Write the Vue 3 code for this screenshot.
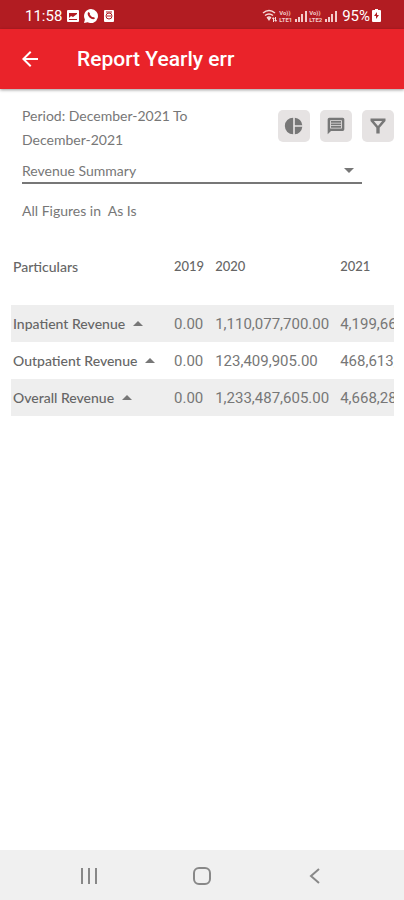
<template>
  <div class="screen">
    <div class="status-bar">
      <div class="status-left">
        <span>11:58</span>
        <svg class="picture" viewBox="0 0 12 12">
          <path fill="#fff" fill-rule="evenodd" d="M1 0h10q1 0 1 1v10q0 1-1 1H1q-1 0-1-1V1q0-1 1-1ZM2 3v5l2-2 2 1 4-3V3ZM2 9h8v1H2Z" />
        </svg>
        <svg class="phone" viewBox="0 0 14 14">
          <path fill="#fff" d="M7 0a7 7 0 1 1-3.3 13.2L0 14l.9-3.6A7 7 0 0 1 7 0Z" />
          <path fill="none" stroke="#b21c22" stroke-width="2" d="M5 3.5q-1 2 1.2 4.2t4.3 1.2" />
        </svg>
        <svg class="picture" viewBox="0 0 12 12">
          <rect x="1" width="10" height="12" rx="1" fill="#fff" />
          <circle cx="6" cy="6" r="3" fill="none" stroke="#b21c22" />
          <path stroke="#b21c22" d="M4 6h4M3 2h6" />
        </svg>
      </div>
      <div class="status-right">
        <svg class="wifi" viewBox="0 0 16 14">
          <path fill="none" stroke="#f7dcdc" stroke-width="1.5" d="M1 4q6-5 12 0M3 6.500q4-3 8 0M5 9q2-2 4 0" />
          <path fill="#f7dcdc" d="m7 12-2-3h4ZM11 8l2 2h-1v3h-1v-3h-1ZM14 13l-2-2h1V8h1v3h1Z" />
        </svg>
        <template v-for="sim in sims" :key="sim">
          <span class="volte"><span>Vo))</span><span>{{ sim }}</span></span>
          <svg class="signal" viewBox="0 0 13 12">
            <path fill="#f3cccc" d="M0 9h2v3H0ZM3 7h2v5H3ZM6 4h2v8H6ZM10 1h2v11h-2Z" />
          </svg>
        </template>
        <span class="percent">95%</span>
        <svg class="battery" viewBox="0 0 9 13">
          <path fill="#fff" d="M3 0h3v1h2q1 0 1 1v10q0 1-1 1H1q-1 0-1-1V2q0-1 1-1h2Z" />
          <path fill="#b21c22" d="M5 3 2 7h2v3l3-4H5Z" />
        </svg>
      </div>
    </div>

    <header class="app-bar">
      <button class="back" aria-label="Back">
        <svg viewBox="0 0 24 24"><path fill="#fff" d="M20 11H7.830l5.590-5.590L12 4l-8 8 8 8 1.410-1.410L7.830 13H20Z" /></svg>
      </button>
      <h1>Report Yearly err</h1>
    </header>

    <main>
      <section class="filters">
        <div class="period-row">
          <p>Period: December-2021 To December-2021</p>
          <div class="actions">
            <button aria-label="Chart">
              <svg viewBox="0 0 24 24"><path d="M11 2v20A10 10 0 0 1 11 2ZM13 2v9h9A10 10 0 0 0 13 2ZM13 13v9a10 10 0 0 0 9-9Z" /></svg>
            </button>
            <button aria-label="Comments">
              <svg viewBox="0 0 24 24"><path fill-rule="evenodd" d="M4 2h16a2 2 0 0 1 2 2v12a2 2 0 0 1-2 2H6l-4 4V4a2 2 0 0 1 2-2ZM5 5v10h14V5ZM6 6h12v2H6ZM6 9h12v2H6ZM6 12h12v2H6Z" /></svg>
            </button>
            <button aria-label="Filter">
              <svg viewBox="0 0 24 24"><path fill-rule="evenodd" d="M3 3h18v3l-7 8v7h-4v-7L3 6ZM7 6l5 6 5-6Z" /></svg>
            </button>
          </div>
        </div>
        <div class="select-wrap">
          <select v-model="report" aria-label="Report type">
            <option>Revenue Summary</option>
          </select>
          <svg class="caret" viewBox="0 0 10 5"><path d="M0 0h10L5 5Z" /></svg>
        </div>
        <p class="figures">All Figures in&nbsp; As Is</p>
      </section>

      <div class="table-wrap">
        <table>
          <thead>
            <tr>
              <th>Particulars</th>
              <th v-for="year in years" :key="year" class="year">{{ year }}</th>
            </tr>
          </thead>
          <tbody>
            <tr v-for="row in rows" :key="row.name">
              <th scope="row">
                <button class="sort">
                  {{ row.name }}
                  <svg class="caret" viewBox="0 0 10 5"><path d="M0 5h10L5 0Z" /></svg>
                </button>
              </th>
              <td v-for="(value, i) in row.values" :key="i">{{ value }}</td>
            </tr>
          </tbody>
        </table>
      </div>
    </main>

    <nav class="nav-bar">
      <button aria-label="Recent apps">
        <svg viewBox="0 0 20 20"><path d="M3 2v16M10 2v16M17 2v16" /></svg>
      </button>
      <button aria-label="Home">
        <svg viewBox="0 0 20 20"><rect x="2" y="2" width="16" height="16" rx="5" /></svg>
      </button>
      <button aria-label="Back">
        <svg viewBox="0 0 20 20"><path d="m14 3-8 7 8 7" /></svg>
      </button>
    </nav>
  </div>
</template>

<script setup>
import { ref } from 'vue';

const report = ref('Revenue Summary');
const sims = ['LTE1', 'LTE2'];
const years = ['2019', '2020', '2021'];

const rows = [
  { name: 'Inpatient Revenue', values: ['0.00', '1,110,077,700.00', '4,199,66'] },
  { name: 'Outpatient Revenue', values: ['0.00', '123,409,905.00', '468,613,'] },
  { name: 'Overall Revenue', values: ['0.00', '1,233,487,605.00', '4,668,28'] },
];
</script>

<style>
body {
  margin: 0;
  background: #fff;
}
</style>

<style scoped>
.screen {
  min-height: 100vh;
  display: flex;
  flex-direction: column;
  font-family: Lato, 'Liberation Sans', sans-serif;
  font-size: 14px;
  color: #777;
}

button {
  border: 0;
  padding: 0;
  background: none;
  font: inherit;
  color: inherit;
}

svg {
  display: block;
  flex-shrink: 0;
}

p {
  margin: 0;
}

/* Status bar */
.status-bar {
  display: flex;
  justify-content: space-between;
  align-items: center;
  height: 29px;
  padding: 2px 23px 0 25px;
  box-sizing: border-box;
  background: #b21c22;
  color: #fff;
  font-family: Roboto, sans-serif;
}

.status-left,
.status-right {
  display: flex;
  align-items: center;
}

.status-left {
  gap: 5px;
  font-size: 15px;
}

.picture {
  width: 12px;
  height: 12px;
}

.phone {
  width: 14px;
  height: 14px;
}

.wifi {
  width: 16px;
  height: 14px;
}

.volte {
  display: flex;
  flex-direction: column;
  width: 16px;
  margin-left: 1px;
  font-size: 6px;
  font-weight: 700;
  line-height: 7px;
  color: #f3cccc;
}

.signal {
  width: 13px;
  height: 12px;
}

.percent {
  margin: 0 2px 0 4px;
  font-size: 15px;
}

.battery {
  width: 9px;
  height: 13px;
}

/* App bar */
.app-bar {
  display: flex;
  align-items: center;
  gap: 35px;
  height: 60px;
  padding: 0 18px;
  background: #ea232a;
  box-shadow: 0 1px 3px rgba(0, 0, 0, 0.4);
}

.back svg {
  width: 24px;
  height: 24px;
}

.app-bar h1 {
  margin: 0;
  color: #fff;
  font-family: Roboto, sans-serif;
  font-size: 21px;
  font-weight: 500;
}

main {
  flex: 1;
}

/* Report options */
.filters {
  padding: 15px 10px 0 22px;
}

.period-row {
  display: flex;
  justify-content: space-between;
  line-height: 24px;
}

.period-row p {
  width: 170px;
}

.actions {
  display: flex;
  gap: 10px;
  padding-top: 6px;
}

.actions button {
  display: grid;
  place-items: center;
  width: 32px;
  height: 32px;
  border-radius: 5px;
  background: #e6e3e3;
}

.actions svg {
  width: 20px;
  height: 20px;
  fill: #777;
}

.select-wrap {
  display: flex;
  align-items: center;
  margin-right: 32px;
  padding: 6px 8px 0 0;
  border-bottom: 2px solid #777;
}

select {
  flex: 1;
  height: 24px;
  border: 0;
  padding: 0;
  appearance: none;
  background: none;
  font: inherit;
  color: inherit;
}

.caret {
  width: 10px;
  height: 5px;
  fill: #777;
}

.figures {
  padding-top: 15px;
  line-height: 24px;
}

/* Revenue table */
.table-wrap {
  margin: 21px 10px 0 11px;
  overflow: hidden;
}

table {
  min-width: 100%;
  border-collapse: collapse;
  white-space: nowrap;
}

th,
td {
  height: 37px;
  padding: 0 11px 0 0;
  text-align: left;
}

th {
  font-weight: 500;
  color: #666;
}

th:first-child {
  width: 150px;
  min-width: 150px;
  padding-left: 2px;
}

thead th {
  height: 44px;
  padding-bottom: 17px;
}

.year {
  font-size: 13px;
}

td {
  font-family: Roboto, sans-serif;
  font-size: 15px;
}

tbody tr:nth-child(odd) {
  background: #eee;
}

.sort {
  display: flex;
  align-items: center;
  gap: 8px;
}

/* Navigation bar */
.nav-bar {
  display: flex;
  justify-content: space-around;
  align-items: center;
  height: 50px;
  padding: 2px 32px 0;
  box-sizing: border-box;
  background: #f0f0f0;
}

.nav-bar svg {
  width: 20px;
  height: 20px;
  fill: none;
  stroke: #888;
  stroke-width: 2;
}
</style>
